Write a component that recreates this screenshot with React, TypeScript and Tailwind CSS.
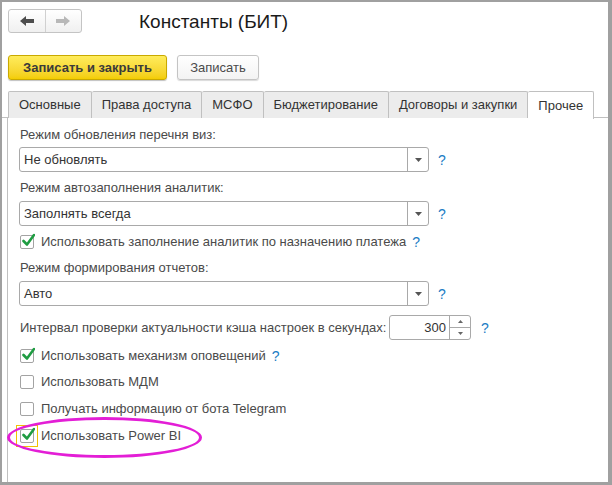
import React from 'react';

const font = { fontFamily: '"Liberation Sans", Arial, sans-serif' };

function Arrow({ dir, color }: { dir: 'left' | 'right'; color: string }) {
  return (
    <svg width="14" height="10" viewBox="0 0 14 10">
      {dir === 'left' ? (
        <path d="M0 5 L6 0 L6 3 L14 3 L14 7 L6 7 L6 10 Z" fill={color} />
      ) : (
        <path d="M14 5 L8 0 L8 3 L0 3 L0 7 L8 7 L8 10 Z" fill={color} />
      )}
    </svg>
  );
}

function Help({ className = '' }: { className?: string }) {
  return <span className={'text-[14px] text-[#1b7cc4] leading-none ' + className}>?</span>;
}

function CheckBox({ checked, focused }: { checked?: boolean; focused?: boolean }) {
  const box = (
    <span className="relative block w-[14px] h-[14px] border border-[#a3a3a3] rounded-[2px] bg-white">
      {checked && (
        <svg className="absolute left-[1px] top-[-3px]" width="13" height="14" viewBox="0 0 13 14">
          <path d="M1.5 8 L5 11.5 L12 2" fill="none" stroke="#1f9c42" strokeWidth="2.6" strokeLinecap="round" strokeLinejoin="round" />
        </svg>
      )}
    </span>
  );
  if (focused) {
    return (
      <span className="flex items-center justify-center w-[22px] h-[22px] border border-[#f2c200] -ml-[4px] -mr-[4px]">
        {box}
      </span>
    );
  }
  return box;
}

function Select({ value }: { value: string }) {
  return (
    <div className="flex items-center gap-[9px]">
      <div className="flex w-[410px] h-[25px] border border-[#a9a9a9] rounded-[3px] bg-white">
        <div className="flex-1 flex items-center pl-[4px] text-[13px] text-[#333]">{value}</div>
        <div className="w-[21px] border-l border-[#a9a9a9] flex items-center justify-center">
          <svg width="7" height="4" viewBox="0 0 7 4"><path d="M0 0 L7 0 L3.5 4 Z" fill="#555" /></svg>
        </div>
      </div>
      <Help />
    </div>
  );
}

function CheckRow({ label, checked, help, focused, className = '' }: { label: string; checked?: boolean; help?: boolean; focused?: boolean; className?: string }) {
  return (
    <div className={'flex items-center h-[16px] ' + className}>
      <div className="ml-[1px]">
        <CheckBox checked={checked} focused={focused} />
      </div>
      <span className="ml-[7px] text-[13px] text-[#4a4a4a]">{label}</span>
      {help && <Help className="ml-[6px]" />}
    </div>
  );
}

const tabs = ['Основные', 'Права доступа', 'МСФО', 'Бюджетирование', 'Договоры и закупки', 'Прочее'];

export default function App() {
  return (
    <div className="w-[612px] h-[485px] bg-[#a0a0a0] pt-[2px] pl-[2px] pr-[4px] pb-[3px]" style={font}>
      <div className="relative w-full h-full bg-white flex flex-col">
        {/* header */}
        <div className="flex items-center h-[24px] mt-[7px] pl-[6px]">
          <div className="flex w-[74px] h-[24px] border border-[#c4c4c4] rounded-[3px] bg-gradient-to-b from-white to-[#f0f0f0]">
            <div className="flex-1 flex items-center justify-center border-r border-[#d0d0d0]">
              <Arrow dir="left" color="#4d4d4d" />
            </div>
            <div className="flex-1 flex items-center justify-center">
              <Arrow dir="right" color="#b8b8b8" />
            </div>
          </div>
          <div className="ml-[57px] text-[19px] text-[#1a1a1a] leading-none">Константы (БИТ)</div>
        </div>

        {/* command bar */}
        <div className="flex items-center gap-[10px] mt-[22px] pl-[6px]">
          <button className="w-[159px] h-[25px] rounded-[3px] border border-[#c9a900] bg-gradient-to-b from-[#ffec5a] to-[#f3cd00] text-[13px] font-bold text-[#3a3a3a] shadow-[0_1px_1px_rgba(0,0,0,0.25)]">
            Записать и закрыть
          </button>
          <button className="w-[82px] h-[25px] rounded-[3px] border border-[#c4c4c4] bg-gradient-to-b from-white to-[#f3f3f3] text-[13px] text-[#4a4a4a] shadow-[0_1px_1px_rgba(0,0,0,0.15)]">
            Записать
          </button>
        </div>

        {/* tabs */}
        <div className="flex mt-[11px] pl-[6px] h-[27px] border-b border-[#c0c0c0]">
          {tabs.map((t, i) => {
            const active = i === tabs.length - 1;
            return (
              <div
                key={t}
                className={
                  'h-[27px] flex items-center text-[13px] text-[#333] border-t border-r border-[#c0c0c0] rounded-t-[2px] ' +
                  (i === 0 ? 'border-l ' : '') +
                  (active ? 'bg-white -mb-[1px] h-[28px] px-[10px]' : 'bg-[#ececec] px-[10px]')
                }
              >
                {t}
              </div>
            );
          })}
        </div>

        {/* panel */}
        <div className="flex-1 ml-[5px] border-l border-[#c0c0c0] pl-[11px] flex flex-col">
          <div className="mt-[9px] h-[16px] leading-[16px] text-[13px] text-[#4a4a4a] pl-[1px]">Режим обновления перечня виз:</div>
          <div className="mt-[4px]"><Select value="Не обновлять" /></div>

          <div className="mt-[8px] h-[16px] leading-[16px] text-[13px] text-[#4a4a4a] pl-[1px]">Режим автозаполнения аналитик:</div>
          <div className="mt-[5px]"><Select value="Заполнять всегда" /></div>

          <CheckRow className="mt-[8px]" checked help label="Использовать заполнение аналитик по назначению платежа" />

          <div className="mt-[10px] h-[16px] leading-[16px] text-[13px] text-[#4a4a4a] pl-[1px]">Режим формирования отчетов:</div>
          <div className="mt-[5px]"><Select value="Авто" /></div>

          <div className="mt-[9px] flex items-center h-[25px]">
            <span className="text-[13px] text-[#4a4a4a] pl-[1px]">Интервал проверки актуальности кэша настроек в секундах:</span>
          </div>

          <CheckRow className="mt-[8px]" checked help label="Использовать механизм оповещений" />
          <CheckRow className="mt-[10px]" label="Использовать МДМ" />
          <CheckRow className="mt-[11px]" label="Получать информацию от бота Telegram" />
          <CheckRow className="mt-[11px]" checked focused label="Использовать Power BI" />
        </div>

        {/* spin field, placed in interval row */}
        <div className="absolute left-[387px] top-[313px] flex items-center gap-[10px]">
          <div className="flex w-[82px] h-[25px] border border-[#a9a9a9] rounded-[3px] bg-white">
            <div className="flex-1 flex items-center justify-end pr-[3px] text-[13px] text-[#333]">300</div>
            <div className="w-[21px] border-l border-[#a9a9a9] flex flex-col">
              <div className="flex-1 flex items-center justify-center border-b border-[#a9a9a9]">
                <svg width="5" height="3" viewBox="0 0 5 3"><path d="M0 3 L5 3 L2.5 0 Z" fill="#666" /></svg>
              </div>
              <div className="flex-1 flex items-center justify-center">
                <svg width="5" height="3" viewBox="0 0 5 3"><path d="M0 0 L5 0 L2.5 3 Z" fill="#666" /></svg>
              </div>
            </div>
          </div>
          <Help />
        </div>

        {/* highlight */}
        <div className="absolute left-[5px] top-[415px] w-[195px] h-[41px] rounded-[50%] border-[3px] border-[#e31ed6]" />
      </div>
    </div>
  );
}
